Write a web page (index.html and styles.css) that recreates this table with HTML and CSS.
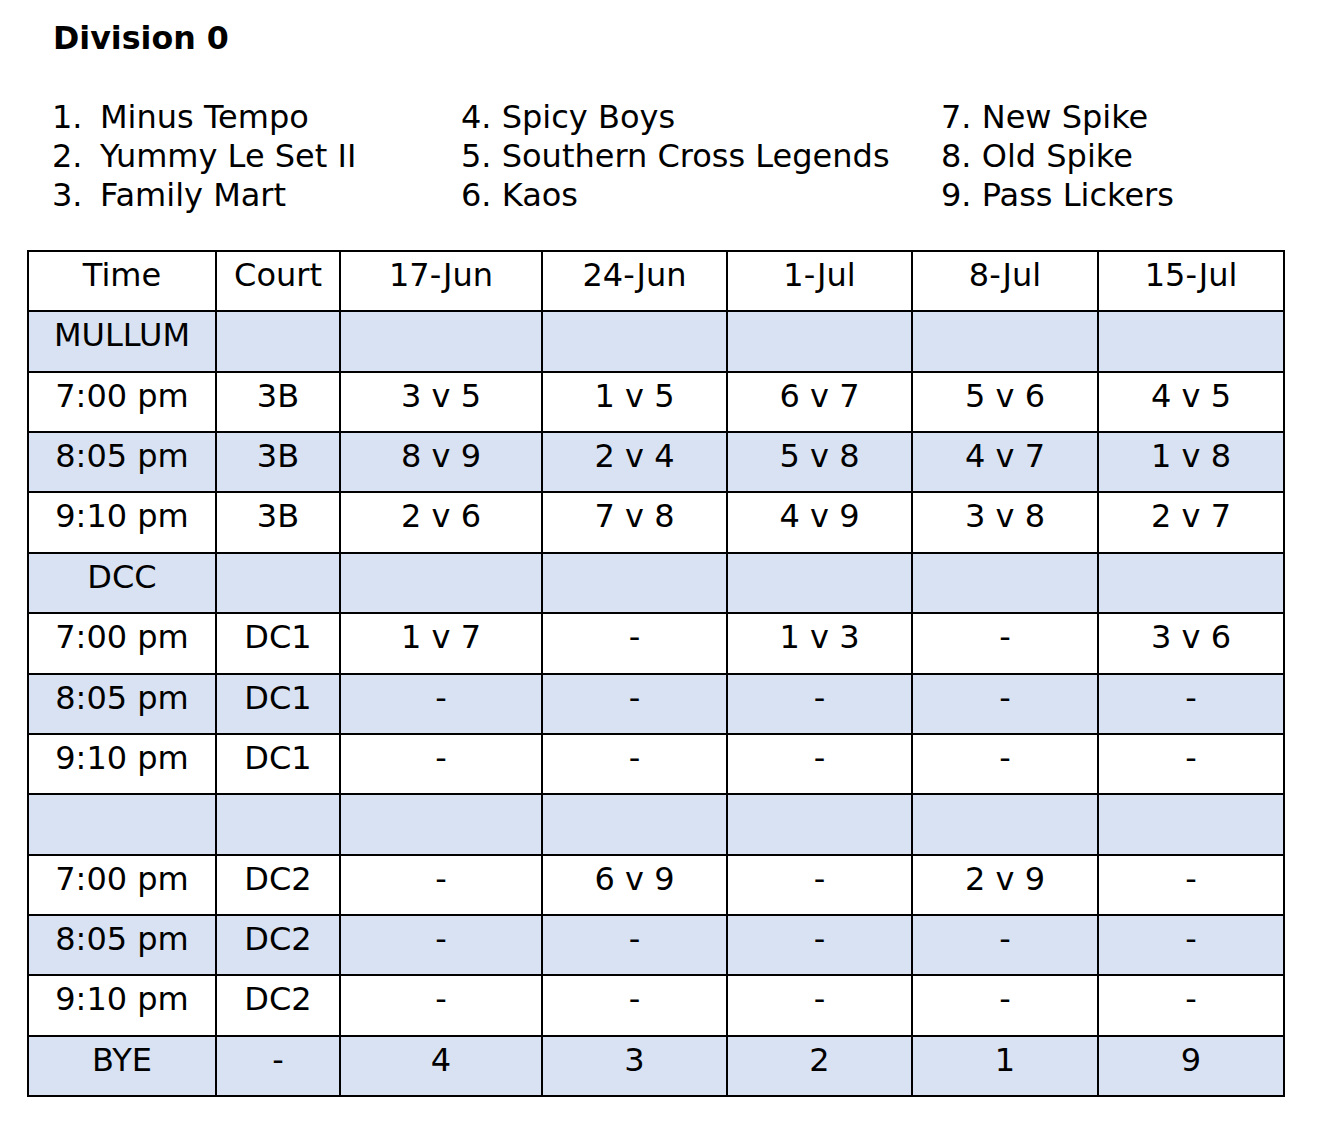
FILE: index.html
```html
<!DOCTYPE html>
<html>
<head>
<meta charset="utf-8">
<link rel="stylesheet" href="styles.css">
</head>
<body>
<div class="page">
  <h1 class="title">Division 0</h1>
  <div class="teams">
    <div class="team-col col1">
      <div class="team"><span class="num">1.</span><span>Minus Tempo</span></div>
      <div class="team"><span class="num">2.</span><span>Yummy Le Set II</span></div>
      <div class="team"><span class="num">3.</span><span>Family Mart</span></div>
    </div>
    <div class="team-col col2">
      <div class="team">4. Spicy Boys</div>
      <div class="team">5. Southern Cross Legends</div>
      <div class="team">6. Kaos</div>
    </div>
    <div class="team-col col3">
      <div class="team">7. New Spike</div>
      <div class="team">8. Old Spike</div>
      <div class="team">9. Pass Lickers</div>
    </div>
  </div>
  <table class="fixtures">
    <colgroup>
      <col class="c-time"><col class="c-court"><col class="c-d1"><col class="c-d2"><col class="c-d3"><col class="c-d4"><col class="c-d5">
    </colgroup>
    <tbody>
      <tr><td>Time</td><td>Court</td><td>17-Jun</td><td>24-Jun</td><td>1-Jul</td><td>8-Jul</td><td>15-Jul</td></tr>
      <tr class="shade"><td>MULLUM</td><td></td><td></td><td></td><td></td><td></td><td></td></tr>
      <tr><td>7:00 pm</td><td>3B</td><td>3 v 5</td><td>1 v 5</td><td>6 v 7</td><td>5 v 6</td><td>4 v 5</td></tr>
      <tr class="shade"><td>8:05 pm</td><td>3B</td><td>8 v 9</td><td>2 v 4</td><td>5 v 8</td><td>4 v 7</td><td>1 v 8</td></tr>
      <tr><td>9:10 pm</td><td>3B</td><td>2 v 6</td><td>7 v 8</td><td>4 v 9</td><td>3 v 8</td><td>2 v 7</td></tr>
      <tr class="shade"><td>DCC</td><td></td><td></td><td></td><td></td><td></td><td></td></tr>
      <tr><td>7:00 pm</td><td>DC1</td><td>1 v 7</td><td>-</td><td>1 v 3</td><td>-</td><td>3 v 6</td></tr>
      <tr class="shade"><td>8:05 pm</td><td>DC1</td><td>-</td><td>-</td><td>-</td><td>-</td><td>-</td></tr>
      <tr><td>9:10 pm</td><td>DC1</td><td>-</td><td>-</td><td>-</td><td>-</td><td>-</td></tr>
      <tr class="shade"><td></td><td></td><td></td><td></td><td></td><td></td><td></td></tr>
      <tr><td>7:00 pm</td><td>DC2</td><td>-</td><td>6 v 9</td><td>-</td><td>2 v 9</td><td>-</td></tr>
      <tr class="shade"><td>8:05 pm</td><td>DC2</td><td>-</td><td>-</td><td>-</td><td>-</td><td>-</td></tr>
      <tr><td>9:10 pm</td><td>DC2</td><td>-</td><td>-</td><td>-</td><td>-</td><td>-</td></tr>
      <tr class="shade"><td>BYE</td><td>-</td><td>4</td><td>3</td><td>2</td><td>1</td><td>9</td></tr>
    </tbody>
  </table>
</div>
</body>
</html>
```

FILE: styles.css
```css
html, body {
  margin: 0;
  padding: 0;
  background: #ffffff;
}
body {
  font-family: "DejaVu Sans", Verdana, sans-serif;
  color: #000000;
}
.page {
  padding: 19px 0 0 27px;
}
.title {
  margin: 0 0 0 26px;
  font-size: 31.7px;
  font-weight: bold;
  line-height: 38px;
}
.teams {
  display: flex;
  margin: 41px 0 0 25px;
  font-size: 32px;
  line-height: 39px;
}
.team-col {
  display: flex;
  flex-direction: column;
}
.col1 { width: 409px; }
.col2 { width: 480px; }
.team {
  white-space: nowrap;
}
.num {
  display: inline-block;
  width: 48px;
}
.fixtures {
  margin-top: 35px;
  border-collapse: collapse;
  table-layout: fixed;
  width: 1258px;
  font-size: 32px;
}
.c-time { width: 188px; }
.c-court { width: 124px; }
.c-d1 { width: 202px; }
.c-d2 { width: 185px; }
.c-d3 { width: 185px; }
.c-d4 { width: 186px; }
.c-d5 { width: 186px; }
.fixtures td {
  border: 2px solid #000000;
  text-align: center;
  vertical-align: top;
  height: 60.36px;
  padding: 3px 2px 0 2px;
  box-sizing: border-box;
  line-height: 40px;
  white-space: nowrap;
}
.fixtures tr.shade td {
  background: #d9e2f3;
}
```
